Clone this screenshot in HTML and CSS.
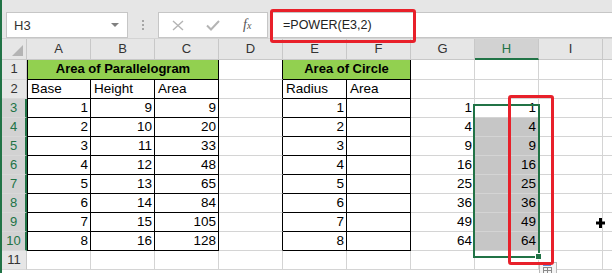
FILE: index.html
```html
<!DOCTYPE html>
<html lang="en">
<head>
    <meta charset="UTF-8">
    <meta name="viewport" content="width=device-width, initial-scale=1.0">
    <title>POWER function</title>
    <link rel="stylesheet" href="styles.css">
</head>
<body>
    <div class="app">
        <div class="edge"></div>
        <div class="main">
            <div class="toolbar">
                <div class="name-box">
                    <span>H3</span>
                    <span class="caret"></span>
                </div>
                <div class="grip"><i></i><i></i><i></i></div>
                <div class="fx-box">
                    <svg class="fx-icon" width="12" height="11" viewBox="0 0 12 11"><path d="M1 1 L11 10 M11 1 L1 10" stroke="#b4b4b4" stroke-width="1.4" fill="none"/></svg>
                    <svg class="fx-icon" width="14" height="11" viewBox="0 0 14 11"><path d="M1 5.5 L5 9.5 L13 1" stroke="#b4b4b4" stroke-width="2" fill="none"/></svg>
                    <span class="fx">f<small>x</small></span>
                </div>
                <div class="formula">=POWER(E3,2)</div>
            </div>

            <div class="sheet">
                <!-- column headers -->
                <div class="corner"><span class="corner-tri"></span></div>
                <div class="ch">A</div>
                <div class="ch">B</div>
                <div class="ch">C</div>
                <div class="ch">D</div>
                <div class="ch">E</div>
                <div class="ch">F</div>
                <div class="ch">G</div>
                <div class="ch ch-sel">H</div>
                <div class="ch">I</div>
                <div class="ch ch-last"></div>

                <!-- row 1 -->
                <div class="rh">1</div>
                <div class="cell title span3 tl tb">Area of Parallelogram</div>
                <div class="cell br"></div>
                <div class="cell title span2 tb">Area of Circle</div>
                <div class="cell"></div>
                <div class="cell"></div>
                <div class="cell"></div>
                <div class="cell last"></div>

                <!-- row 2 -->
                <div class="rh">2</div>
                <div class="cell tl tb">Base</div>
                <div class="cell tb">Height</div>
                <div class="cell tb">Area</div>
                <div class="cell br"></div>
                <div class="cell tb">Radius</div>
                <div class="cell tb">Area</div>
                <div class="cell"></div>
                <div class="cell"></div>
                <div class="cell"></div>
                <div class="cell last"></div>

                <!-- row 3 -->
                <div class="rh rh-sel">3</div>
                <div class="cell num tl tb">1</div>
                <div class="cell num tb">9</div>
                <div class="cell num tb">9</div>
                <div class="cell br"></div>
                <div class="cell num tb">1</div>
                <div class="cell tb"></div>
                <div class="cell num">1</div>
                <div class="cell num">1</div>
                <div class="cell"></div>
                <div class="cell last"></div>

                <!-- row 4 -->
                <div class="rh rh-sel">4</div>
                <div class="cell num tl tb">2</div>
                <div class="cell num tb">10</div>
                <div class="cell num tb">20</div>
                <div class="cell br"></div>
                <div class="cell num tb">2</div>
                <div class="cell tb"></div>
                <div class="cell num">4</div>
                <div class="cell num shade">4</div>
                <div class="cell"></div>
                <div class="cell last"></div>

                <!-- row 5 -->
                <div class="rh rh-sel">5</div>
                <div class="cell num tl tb">3</div>
                <div class="cell num tb">11</div>
                <div class="cell num tb">33</div>
                <div class="cell br"></div>
                <div class="cell num tb">3</div>
                <div class="cell tb"></div>
                <div class="cell num">9</div>
                <div class="cell num shade">9</div>
                <div class="cell"></div>
                <div class="cell last"></div>

                <!-- row 6 -->
                <div class="rh rh-sel">6</div>
                <div class="cell num tl tb">4</div>
                <div class="cell num tb">12</div>
                <div class="cell num tb">48</div>
                <div class="cell br"></div>
                <div class="cell num tb">4</div>
                <div class="cell tb"></div>
                <div class="cell num">16</div>
                <div class="cell num shade">16</div>
                <div class="cell"></div>
                <div class="cell last"></div>

                <!-- row 7 -->
                <div class="rh rh-sel">7</div>
                <div class="cell num tl tb">5</div>
                <div class="cell num tb">13</div>
                <div class="cell num tb">65</div>
                <div class="cell br"></div>
                <div class="cell num tb">5</div>
                <div class="cell tb"></div>
                <div class="cell num">25</div>
                <div class="cell num shade">25</div>
                <div class="cell"></div>
                <div class="cell last"></div>

                <!-- row 8 -->
                <div class="rh rh-sel">8</div>
                <div class="cell num tl tb">6</div>
                <div class="cell num tb">14</div>
                <div class="cell num tb">84</div>
                <div class="cell br"></div>
                <div class="cell num tb">6</div>
                <div class="cell tb"></div>
                <div class="cell num">36</div>
                <div class="cell num shade">36</div>
                <div class="cell"></div>
                <div class="cell last"></div>

                <!-- row 9 -->
                <div class="rh rh-sel">9</div>
                <div class="cell num tl tb">7</div>
                <div class="cell num tb">15</div>
                <div class="cell num tb">105</div>
                <div class="cell br"></div>
                <div class="cell num tb">7</div>
                <div class="cell tb"></div>
                <div class="cell num">49</div>
                <div class="cell num shade">49</div>
                <div class="cell"></div>
                <div class="cell last"></div>

                <!-- row 10 -->
                <div class="rh rh-sel">10</div>
                <div class="cell num tl tb">8</div>
                <div class="cell num tb">16</div>
                <div class="cell num tb">128</div>
                <div class="cell br"></div>
                <div class="cell num tb">8</div>
                <div class="cell tb"></div>
                <div class="cell num">64</div>
                <div class="cell num shade">64</div>
                <div class="cell"></div>
                <div class="cell last"></div>

                <!-- row 11 -->
                <div class="rh">11</div>
                <div class="cell"></div>
                <div class="cell"></div>
                <div class="cell"></div>
                <div class="cell"></div>
                <div class="cell"></div>
                <div class="cell"></div>
                <div class="cell"></div>
                <div class="cell"></div>
                <div class="cell"></div>
                <div class="cell last"></div>
            </div>
        </div>

        <!-- overlays -->
        <div class="sel-box"></div>
        <div class="fill-handle"></div>
        <svg class="quick-analysis" width="18" height="12" viewBox="0 0 18 12">
            <rect x="0.5" y="0.5" width="17" height="12" fill="#f4f4f4" stroke="#b9b9b9"/>
            <rect x="4" y="2" width="8" height="2" fill="#5b8fe0"/>
            <rect x="4.5" y="5.5" width="8" height="6" fill="none" stroke="#8a8a8a"/>
            <path d="M8.5 5.5 V11.5 M4.5 8.5 H12.5" stroke="#8a8a8a"/>
        </svg>
        <div class="red-box red-formula"></div>
        <div class="red-box red-col"></div>
        <svg class="plus-cursor" width="9" height="10" viewBox="0 0 9 10"><path d="M3 0 H6 V3.5 H9 V6.5 H6 V10 H3 V6.5 H0 V3.5 H3 Z" fill="#000"/></svg>
    </div>
</body>
</html>
```

FILE: styles.css
```css
* {
    box-sizing: border-box;
}
body {
    margin: 0;
    background-color: #ffffff;
    font-family: "Liberation Sans", Arial, sans-serif;
    font-size: 13.5px;
    color: #000;
}
.app {
    position: relative;
    display: flex;
    width: 612px;
    height: 273px;
    overflow: hidden;
}
.edge {
    width: 2px;
    background-color: #217346;
    flex-shrink: 0;
}
.main {
    flex: 1;
    display: flex;
    flex-direction: column;
}
.toolbar {
    height: 46px;
    background-color: #e6e6e6;
    display: flex;
    align-items: flex-start;
    padding: 12px 0 0 4px;
    border-bottom: 1px solid #d4d4d4;
}
.name-box {
    width: 122px;
    height: 26px;
    background-color: #fff;
    border: 1px solid #c6c6c6;
    display: flex;
    align-items: center;
    justify-content: space-between;
    padding: 0 8px 0 7px;
    color: #333;
    font-size: 13px;
}
.caret {
    width: 0;
    height: 0;
    border-left: 4px solid transparent;
    border-right: 4px solid transparent;
    border-top: 4px solid #808080;
}
.grip {
    display: flex;
    flex-direction: column;
    gap: 2px;
    margin: 8px 14px 0 14px;
}
.grip i {
    display: block;
    width: 2px;
    height: 2px;
    background-color: #a6a6a6;
}
.fx-box {
    width: 110px;
    height: 26px;
    background-color: #fff;
    border: 1px solid #c6c6c6;
    display: flex;
    align-items: center;
    padding-left: 13px;
    gap: 22px;
}
.fx {
    font-family: "Liberation Serif", serif;
    font-style: italic;
    font-size: 14px;
    color: #555;
    margin-left: 1px;
}
.fx small {
    font-size: 10px;
}
.formula {
    flex: 1;
    height: 26px;
    margin-left: 2px;
    background-color: #fff;
    border: 1px solid #c6c6c6;
    border-right: none;
    line-height: 24px;
    padding-left: 12px;
    font-size: 12.5px;
    color: #222;
}
.sheet {
    display: grid;
    grid-template-columns: 25px repeat(9, 64px) 1fr;
    grid-template-rows: 21px 20px repeat(10, 19px) 19px;
}
.corner, .ch, .rh {
    background-color: #e6e6e6;
    color: #333;
    font-size: 13px;
}
.corner {
    display: flex;
    justify-content: flex-end;
    align-items: flex-end;
    padding: 0 3px 3px 0;
    border-right: 1px solid #c8c8c8;
    border-bottom: 1px solid #c8c8c8;
}
.corner-tri {
    width: 0;
    height: 0;
    border-left: 11px solid transparent;
    border-bottom: 11px solid #b4b4b4;
}
.ch {
    text-align: center;
    line-height: 20px;
    border-right: 1px solid #c8c8c8;
    border-bottom: 1px solid #c8c8c8;
}
.ch-sel {
    background-color: #d2d2d2;
    color: #217346;
    border-bottom: 2px solid #217346;
}
.ch-last {
    border-right: none;
}
.rh {
    text-align: center;
    line-height: 18px;
    border-right: 1px solid #c8c8c8;
    border-bottom: 1px solid #d8d8d8;
}
.rh-sel {
    background-color: #d2d2d2;
    color: #217346;
    border-right: 2px solid #217346;
}
.cell {
    border-right: 1px solid #d4d4d4;
    border-bottom: 1px solid #d4d4d4;
    padding: 0 3px;
    line-height: 18px;
    white-space: nowrap;
    overflow: hidden;
}
.cell.last {
    border-right: none;
}
.num {
    text-align: right;
    padding-right: 2px;
}
.tb {
    border-right-color: #000;
    border-bottom-color: #000;
}
.tl {
    border-left: 1px solid #000;
}
.br {
    border-right-color: #000;
}
.title {
    background-color: #92d050;
    font-weight: bold;
    font-size: 13px;
    text-align: center;
}
.span3 {
    grid-column: span 3;
}
.span2 {
    grid-column: span 2;
}
.shade {
    background-color: #c6c6c6;
}
.sel-box {
    position: absolute;
    left: 473px;
    top: 104px;
    width: 67px;
    height: 154px;
    border: 2px solid #217346;
}
.fill-handle {
    position: absolute;
    left: 535px;
    top: 253px;
    width: 7px;
    height: 7px;
    background-color: #217346;
    border: 1px solid #fff;
}
.quick-analysis {
    position: absolute;
    left: 539px;
    top: 262px;
}
.red-box {
    position: absolute;
    border: 3px solid #e8202a;
    border-radius: 3px;
}
.red-formula {
    left: 270px;
    top: 9px;
    width: 146px;
    height: 34px;
}
.red-col {
    left: 508px;
    top: 95px;
    width: 46px;
    height: 170px;
}
.plus-cursor {
    position: absolute;
    left: 596px;
    top: 218px;
}
```
